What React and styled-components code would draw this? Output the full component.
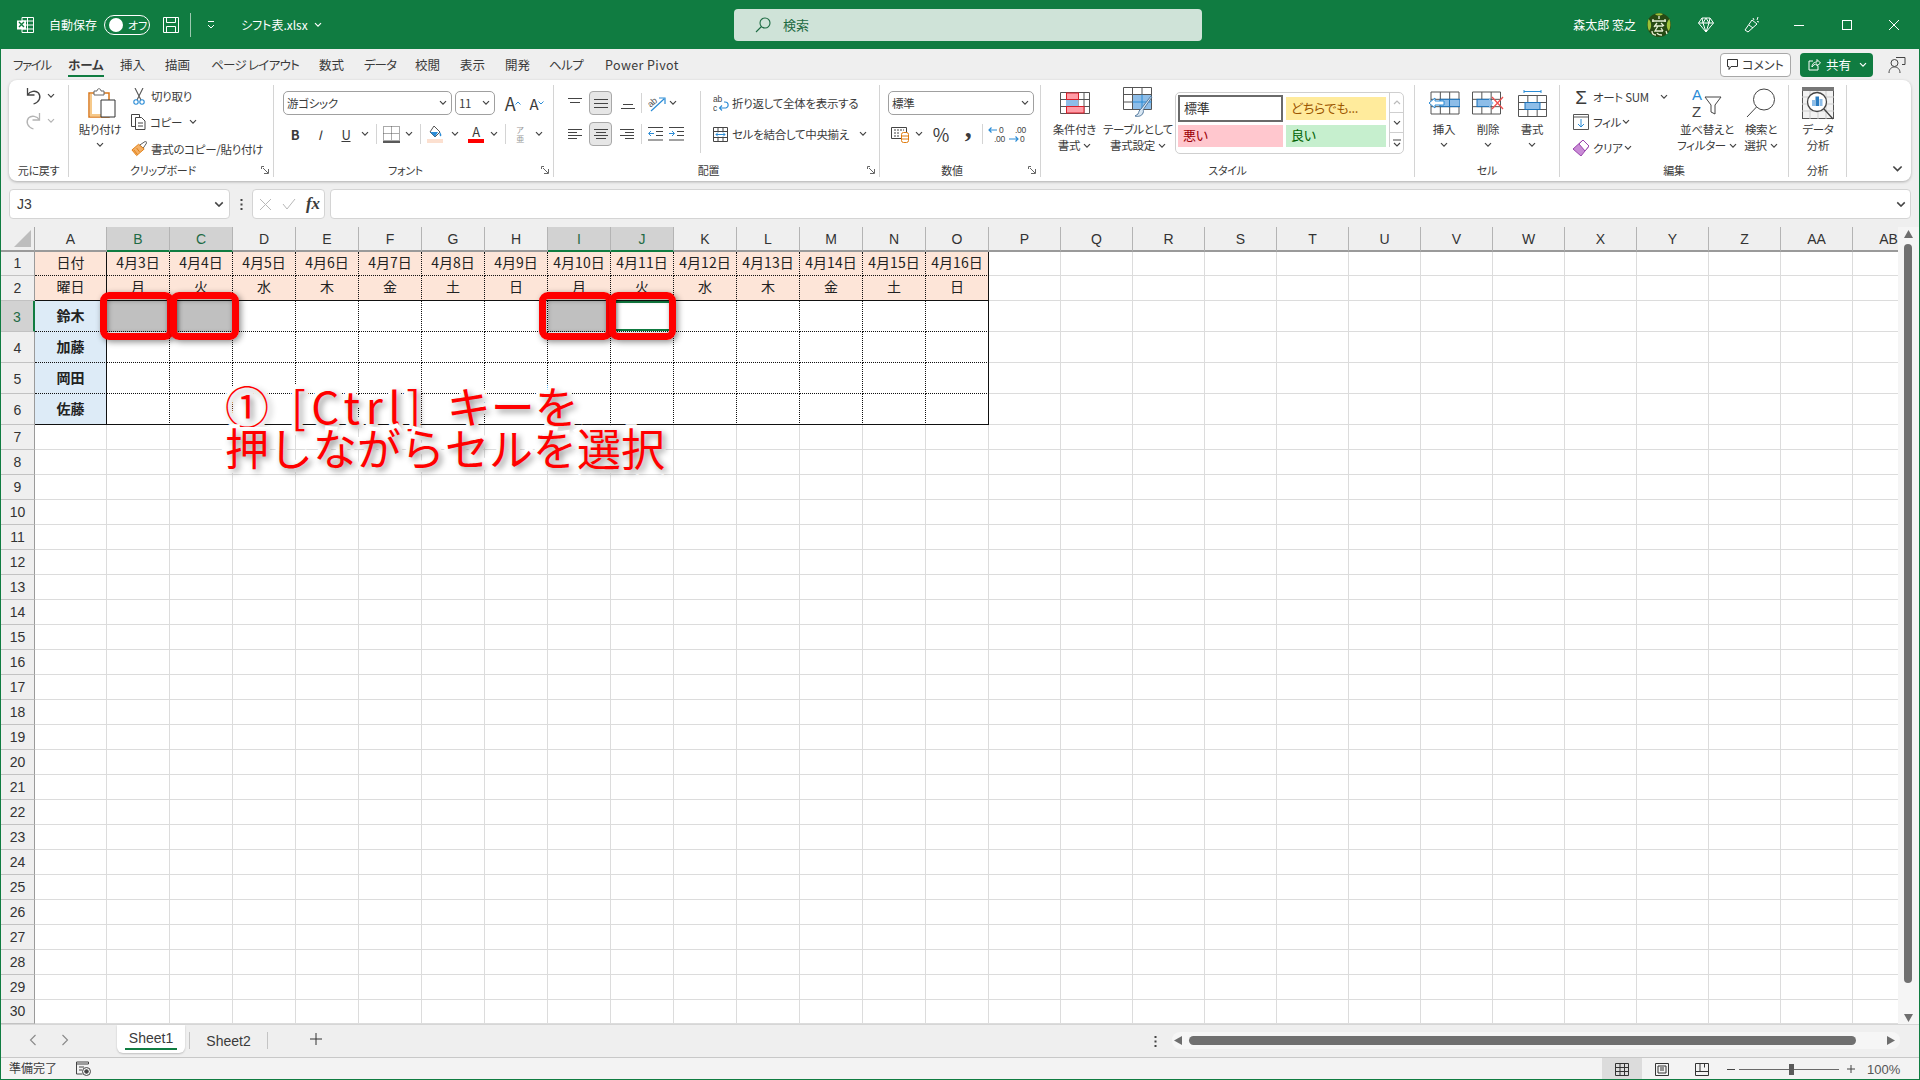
import React, { Fragment } from "react";
import styled, { createGlobalStyle } from "styled-components";

const GREEN = "#107c41";
const INK = "#3b3b3b";
const BLUE = "#2b8cd6";
const SKY = "#8dbde8";

const GlobalStyle = createGlobalStyle`
  html, body { margin: 0; padding: 0; background: #efefef; }
  body {
    font-family: "Noto Sans CJK JP", "Noto Sans", sans-serif;
    font-feature-settings: "palt";
    color: ${INK};
    overflow: hidden;
  }
`;

const Window = styled.div`
  position: relative;
  width: 1920px;
  height: 1080px;
  background: #efefef;
  overflow: hidden;
  &::after {
    content: "";
    position: absolute;
    inset: 0;
    border: 1px solid ${GREEN};
    border-width: 0 1px 1.5px 1.5px;
    pointer-events: none;
    z-index: 5;
  }
`;

/* title bar */
const TitleBar = styled.header`
  display: grid;
  grid-template-columns: 734px 468px 1fr;
  align-items: center;
  height: 49px;
  background: ${GREEN};
  color: #fff;
  font-size: 12px;
`;
const TitleLeft = styled.div`
  display: flex;
  align-items: center;
  padding-left: 17px;
`;
const TitleText = styled.span`
  margin-left: ${(p) => p.$ml || 0}px;
  white-space: nowrap;
`;
const Toggle = styled.div`
  display: flex;
  align-items: center;
  gap: 5px;
  width: 46px;
  height: 20px;
  margin-left: 7px;
  padding-left: 4px;
  box-sizing: border-box;
  border: 1px solid #fff;
  border-radius: 10px;
  font-size: 11px;
  white-space: nowrap;
  &::before {
    content: "";
    flex: none;
    width: 14px;
    height: 14px;
    border-radius: 50%;
    background: #fff;
  }
`;
const TitleRule = styled.i`
  width: 1px;
  height: 24px;
  margin-left: 11px;
  background: #9cc9b0;
`;
const TitleIcon = styled.span`
  display: flex;
  margin-left: ${(p) => p.$ml || 0}px;
`;
const SearchBox = styled.div`
  display: flex;
  align-items: center;
  height: 32px;
  padding-left: 21px;
  gap: 12px;
  border-radius: 4px;
  background: #cfe3d8;
  color: #1d6b43;
  font-size: 13px;
`;
const TitleRight = styled.div`
  display: flex;
  align-items: center;
  justify-content: flex-end;
  padding-right: 2px;
`;
const Avatar = styled.span`
  display: flex;
  margin: 0 13px 0 11px;
`;
const CaptionSlot = styled.span`
  display: flex;
  justify-content: center;
  width: ${(p) => p.$w || 47.5}px;
`;

/* tabs */
const TabRow = styled.nav`
  display: flex;
  align-items: center;
  height: 31px;
  padding-left: 13px;
  font-size: 12.5px;
`;
const Tab = styled.div`
  width: ${(p) => p.$w}px;
  white-space: nowrap;
  letter-spacing: ${(p) => p.$ls || 0}px;
  span {
    position: relative;
    display: inline-block;
    font-weight: ${(p) => (p.$active ? 700 : 400)};
  }
  span::after {
    content: "";
    display: ${(p) => (p.$active ? "block" : "none")};
    position: absolute;
    left: 0;
    right: 0;
    bottom: -3px;
    height: 2px;
    background: ${GREEN};
  }
`;
const TabActions = styled.div`
  display: flex;
  align-items: center;
  margin-left: auto;
`;
const CommentBtn = styled.div`
  display: flex;
  align-items: center;
  justify-content: center;
  gap: 4px;
  width: 71px;
  height: 24px;
  box-sizing: border-box;
  background: #fff;
  border: 1px solid #a8a8a8;
  border-radius: 4px;
  font-size: 12px;
  white-space: nowrap;
`;
const ShareBtn = styled.div`
  display: flex;
  align-items: center;
  gap: 5px;
  width: 73px;
  height: 24px;
  margin-left: 9px;
  padding-left: 8px;
  box-sizing: border-box;
  background: ${GREEN};
  border-radius: 4px;
  color: #fff;
  font-size: 12.5px;
  white-space: nowrap;
`;
const ShareChev = styled.span`
  display: flex;
  margin-left: 3px;
`;
const FeedbackSlot = styled.span`
  display: flex;
  justify-content: center;
  width: 47px;
`;

/* ribbon */
const Ribbon = styled.section`
  display: flex;
  height: 101px;
  margin: 0 9px;
  background: #fff;
  border-radius: 8px;
  box-shadow: 0 1px 3px rgba(0, 0, 0, 0.28);
  font-size: 11.5px;
  letter-spacing: -0.3px;
`;
const Group = styled.div`
  display: flex;
  flex-direction: column;
  flex: none;
  width: ${(p) => p.$w}px;
  height: 92px;
  margin-top: 5px;
  box-sizing: border-box;
  border-right: 1px solid #d4d4d4;
`;
const GroupBody = styled.div`
  display: flex;
  flex: 1;
  padding-left: ${(p) => p.$pl || 0}px;
  padding-top: ${(p) => p.$pt || 0}px;
`;
const GroupFoot = styled.div`
  display: flex;
  align-items: center;
  height: 14px;
  font-size: 11px;
`;
const FootText = styled.span`
  flex: 1;
  text-align: center;
`;
const Launcher = styled.span`
  display: flex;
  justify-content: center;
  width: 16px;
`;
const Stack = styled.div`
  display: flex;
  flex-direction: column;
  flex: none;
  width: ${(p) => (p.$w ? p.$w + "px" : "auto")};
  gap: ${(p) => p.$gap ?? 0}px;
  margin-left: ${(p) => p.$ml || 0}px;
`;
const Row = styled.div`
  display: flex;
  align-items: center;
  height: ${(p) => p.$h || 26}px;
  white-space: nowrap;
`;
const Slot = styled.span`
  display: flex;
  align-items: center;
  justify-content: center;
  flex: none;
  width: ${(p) => p.$w}px;
  height: 100%;
  margin-left: ${(p) => p.$ml || 0}px;
  font-size: ${(p) => p.$fs || 12}px;
  font-weight: ${(p) => p.$fw || 400};
  font-style: ${(p) => p.$fst || "normal"};
  text-decoration: ${(p) => p.$td || "none"};
  color: ${(p) => p.$c || "inherit"};
`;
const RowLabel = styled.span`
  margin-left: ${(p) => p.$ml || 0}px;
`;
const MiniRule = styled.i`
  flex: none;
  width: 1px;
  height: ${(p) => p.$h || 20}px;
  margin: 0 ${(p) => p.$mr || 0}px 0 ${(p) => p.$ml || 0}px;
  background: #d4d4d4;
`;
const Select = styled.div`
  display: flex;
  align-items: center;
  justify-content: space-between;
  flex: none;
  width: ${(p) => p.$w}px;
  height: 24px;
  margin-left: ${(p) => p.$ml || 0}px;
  padding: 0 4px 0 3px;
  box-sizing: border-box;
  background: #fff;
  border: 1px solid #a0a0a0;
  border-radius: 5px;
  font-size: 11.5px;
`;
const AlignBtn = styled.span`
  display: flex;
  align-items: center;
  justify-content: center;
  flex: none;
  width: 23px;
  height: 24px;
  margin: 0 ${(p) => p.$mr}px 0 7px;
  box-sizing: border-box;
  border-radius: 4px;
  background: ${(p) => (p.$on ? "#e6e6e6" : "transparent")};
  border: 1px solid ${(p) => (p.$on ? "#a8a8a8" : "transparent")};
`;
const BigBtn = styled.div`
  display: flex;
  flex-direction: column;
  align-items: center;
  flex: none;
  width: ${(p) => p.$w}px;
  line-height: 16px;
  text-align: center;
  white-space: nowrap;
`;
const BigIcon = styled.span`
  display: flex;
  align-items: center;
  justify-content: center;
  height: 30px;
  margin: 3px 0 3px;
  padding-left: ${(p) => p.$nudge || 0}px;
`;
const BigChev = styled.span`
  display: flex;
  align-items: center;
  height: 16px;
`;
const LineChev = styled.span`
  display: inline-flex;
  margin-left: 3px;
  vertical-align: 2px;
`;
const Gallery = styled.div`
  display: grid;
  grid-template-columns: 105px 100px 15px;
  grid-template-rows: 27px 22px;
  gap: 3px;
  width: 229px;
  height: 62px;
  margin: 7px 0 0 5px;
  padding: 2px 0 0 2px;
  box-sizing: border-box;
  border: 1px solid #cfcfcf;
  border-radius: 5px;
  font-size: 13px;
`;
const StyleCell = styled.div`
  display: flex;
  align-items: center;
  padding-left: ${(p) => (p.$box ? 4 : 5)}px;
  padding-bottom: 3px;
  box-sizing: border-box;
  margin: ${(p) => (p.$inset ? "2px 0 2px" : 0)};
  background: ${(p) => p.$bg};
  color: ${(p) => p.$c};
  border: ${(p) => (p.$box ? "2px solid #6a6a6a" : "none")};
`;
const GalleryScroll = styled.div`
  grid-column: 3;
  grid-row: 1 / span 2;
  display: grid;
  grid-template-rows: repeat(3, 20px);
  margin: -2px 0 0 0;
  border-left: 1px solid #cfcfcf;
  span {
    display: flex;
    align-items: center;
    justify-content: center;
    border-bottom: 1px solid #cfcfcf;
  }
  span:last-child { border-bottom: none; }
`;
const RibbonEnd = styled.div`
  display: flex;
  flex: 1;
  align-items: flex-end;
  justify-content: flex-end;
  padding: 0 8px 9px 0;
`;

/* formula bar */
const FormulaBar = styled.div`
  display: flex;
  align-items: stretch;
  height: 30px;
  margin: 8px 9px 0;
`;
const FieldBox = styled.div`
  display: flex;
  align-items: center;
  box-sizing: border-box;
  background: #fff;
  border: 1px solid #d4d4d4;
  border-radius: 4px;
  font-size: 14px;
`;
const NameBox = styled(FieldBox)`
  justify-content: space-between;
  width: 221px;
  padding: 0 5px 0 7px;
  font-family: "Liberation Sans", sans-serif;
`;
const GripSlot = styled.span`
  display: flex;
  align-items: center;
  justify-content: center;
  width: 22px;
`;
const FxBox = styled(FieldBox)`
  width: 73px;
  margin-right: 5px;
`;
const FxText = styled.span`
  font-family: "Liberation Serif", serif;
  font-style: italic;
  font-weight: 700;
  font-size: 17px;
`;
const FormulaInput = styled(FieldBox)`
  flex: 1;
  justify-content: flex-end;
  padding-right: 4px;
`;

/* sheet */
const Workspace = styled.main`
  display: flex;
  height: 797px;
  margin-top: 8px;
`;
const GridWrap = styled.div`
  position: relative;
  flex: none;
  width: 1898px;
  overflow: hidden;
`;
const Sheet = styled.div`
  display: grid;
  grid-template-columns: 35px 72px repeat(14, 63px) repeat(13, 72px);
  grid-template-rows: 25px 24px 24.5px repeat(4, 31px) repeat(23, 25px) 24.5px;
  background: #fff;
`;
const Corner = styled.div`
  display: flex;
  align-items: flex-end;
  justify-content: flex-end;
  padding: 0 3px 3px 0;
  background: #efefef;
  border-right: 1px solid #a8a8a8;
  border-bottom: 2px solid #9a9a9a;
`;
const ColHead = styled.div`
  display: flex;
  align-items: center;
  justify-content: center;
  box-sizing: border-box;
  background: ${(p) => (p.$on ? "#d2d2d2" : "#efefef")};
  border-right: 1px solid #b4b4b4;
  border-bottom: ${(p) => (p.$on ? `2px solid ${GREEN}` : "2px solid #9a9a9a")};
  color: ${(p) => (p.$on ? "#1f6b45" : "#333")};
  font-family: "Liberation Sans", sans-serif;
  font-size: 14px;
`;
const RowHead = styled.div`
  display: flex;
  align-items: center;
  justify-content: center;
  box-sizing: border-box;
  padding: ${(p) => p.$pt || 0}px 0 ${(p) => p.$pb || 0}px 1px;
  background: ${(p) => (p.$on ? "#d2d2d2" : "#efefef")};
  border-right: ${(p) => (p.$on ? `2px solid ${GREEN}` : "1px solid #9a9a9a")};
  border-bottom: 1px solid #c2c2c2;
  color: ${(p) => (p.$on ? "#1f6b45" : "#333")};
  font-family: "Liberation Sans", sans-serif;
  font-size: 14px;
`;
const Cell = styled.div`
  position: relative;
  display: flex;
  align-items: center;
  justify-content: center;
  box-sizing: border-box;
  min-width: 0;
  padding-bottom: ${(p) => p.$pb || 0}px;
  white-space: nowrap;
  font-feature-settings: normal;
  font-size: 14px;
  font-weight: ${(p) => (p.$bold ? 700 : 400)};
  color: #222;
  background: ${(p) => p.$bg || "#fff"};
  border-right: ${(p) => p.$br || "1px solid #dcdcdc"};
  border-bottom: ${(p) => p.$bb || "1px solid #dcdcdc"};
  box-shadow: ${(p) => (p.$active ? `inset 0 2px 0 ${GREEN}, inset 0 -2px 0 ${GREEN}` : "none")};
`;
const RedFrame = styled.div`
  position: absolute;
  top: -9px;
  bottom: -9px;
  left: ${(p) => p.$l}px;
  right: ${(p) => p.$r}px;
  z-index: 2;
  border: 7.5px solid #ff0000;
  border-radius: 9px;
  box-shadow: 2px 2px 6px rgba(0, 0, 0, 0.45), inset 1px 1px 5px rgba(0, 0, 0, 0.4);
`;
const Annotation = styled.div`
  position: absolute;
  left: 225px;
  top: 158px;
  z-index: 3;
  font-size: 44px;
  line-height: 41.5px;
  font-feature-settings: normal;
  white-space: nowrap;
  color: #ff0000;
  -webkit-text-stroke: 8px #fff;
  paint-order: stroke fill;
  text-shadow: 3px 3px 6px rgba(0, 0, 0, 0.45);
`;
const AnnoLatin = styled.span`
  margin: 0 20px 0 22px;
  letter-spacing: 5.5px;
`;
const VScroll = styled.aside`
  display: flex;
  flex-direction: column;
  align-items: center;
  flex: 1;
  padding: 3px 2px 0 0;
  background: #f5f5f5;
`;
const VThumb = styled.div`
  width: 8px;
  height: 739px;
  margin: 5px 0 31px;
  border-radius: 4px;
  background: #707070;
`;

/* sheet tabs */
const SheetBar = styled.div`
  display: flex;
  align-items: flex-start;
  height: 33px;
  box-sizing: border-box;
  border-top: 1px solid #d6d6d6;
`;
const SheetLeft = styled.div`
  display: flex;
  align-items: flex-start;
  flex: none;
  width: 1148px;
  height: 100%;
`;
const NavArrow = styled.span`
  display: flex;
  align-items: center;
  justify-content: center;
  flex: none;
  width: 32px;
  height: 30px;
`;
const Spacer = styled.span`
  flex: none;
  width: ${(p) => p.$w}px;
`;
const SheetTab = styled.div`
  display: flex;
  flex-direction: column;
  align-items: center;
  flex: none;
  width: 68px;
  height: 28px;
  box-sizing: border-box;
  padding-top: 5px;
  background: #fff;
  border-radius: 0 0 6px 6px;
  box-shadow: 0 1px 2px rgba(0, 0, 0, 0.2);
  font-family: "Liberation Sans", sans-serif;
  font-size: 14px;
  line-height: 17px;
  &::after {
    content: "";
    width: 52px;
    height: 2px;
    margin-top: 1px;
    background: ${GREEN};
  }
`;
const SheetName = styled.div`
  flex: none;
  width: 77px;
  padding-top: 8px;
  text-align: center;
  font-family: "Liberation Sans", sans-serif;
  font-size: 14px;
  line-height: 17px;
`;
const SheetRule = styled.i`
  flex: none;
  width: 1px;
  height: 17px;
  margin: 7px 0 0;
  background: #c4c4c4;
`;
const AddSheet = styled.span`
  display: flex;
  justify-content: center;
  flex: none;
  width: 96px;
  padding-top: 8px;
`;
const HDots = styled.span`
  display: flex;
  justify-content: center;
  flex: none;
  width: 14px;
  padding-top: 11px;
`;
const HTrack = styled.div`
  display: flex;
  align-items: center;
  width: 728px;
  height: 17px;
  margin: 7px 0 0 10px;
  padding: 0 4px 0 2px;
  box-sizing: border-box;
  background: #f6f6f6;
  border-radius: 8px;
`;
const HThumb = styled.div`
  width: 667px;
  height: 9px;
  margin: 0 auto 0 6px;
  border-radius: 5px;
  background: #707070;
`;

/* status bar */
const StatusBar = styled.footer`
  display: flex;
  align-items: center;
  height: 23px;
  padding-left: 9px;
  box-sizing: border-box;
  background: #f3f3f3;
  border-top: 1px solid #c8c8c8;
  font-size: 12px;
`;
const StatusText = styled.span`
  margin-top: -4px;
`;
const StatusIcon = styled.span`
  display: flex;
  margin: -2px 0 0 19px;
`;
const ViewGroup = styled.div`
  display: flex;
  align-self: stretch;
  margin-left: auto;
`;
const ViewBtn = styled.span`
  display: flex;
  align-items: center;
  justify-content: center;
  width: 40px;
  background: ${(p) => (p.$on ? "#dcdcdc" : "transparent")};
`;
const Zoomer = styled.div`
  display: flex;
  align-items: center;
  width: 198px;
  padding-left: 5px;
  box-sizing: border-box;
  font-family: "Liberation Sans", sans-serif;
  font-size: 13px;
  color: #555;
`;
const ZoomTrack = styled.div`
  position: relative;
  width: 100px;
  height: 1px;
  margin: 0 8px 0 4px;
  background: #6a6a6a;
  &::after {
    content: "";
    position: absolute;
    left: 50px;
    top: -5px;
    width: 5px;
    height: 11px;
    background: #5a5a5a;
  }
`;
const ZoomText = styled.span`
  margin-left: 12px;
`;
const ColorA = styled.span`
  display: block;
  width: 16px;
  padding-bottom: 1px;
  border-bottom: 4px solid #ff0000;
  text-align: center;
  font-size: 13px;
  line-height: 13px;
`;
const Phonetic = styled.span`
  line-height: 9px;
  text-align: center;
`;
const Comma = styled.span`
  font-family: "Liberation Serif", serif;
  font-size: 28px;
  line-height: 14px;
  margin-top: -12px;
`;
const SigmaGlyph = styled.span`
  font-family: "Liberation Sans", sans-serif;
  font-size: 19px;
  font-weight: 400;
  line-height: 1;
`;

/* icons */
const Chev = ({ c = "#444", s = 8 }) => (
  <svg width={s} height={s * 0.65} viewBox="0 0 8 5">
    <path d="M1 1l3 3 3-3" fill="none" stroke={c} strokeWidth="1.2" />
  </svg>
);
const ChevUp = () => (
  <svg width="8" height="5" viewBox="0 0 8 5">
    <path d="M1 4l3-3 3 3" fill="none" stroke="#bbb" strokeWidth="1.2" />
  </svg>
);
const MoreChev = () => (
  <svg width="8" height="9" viewBox="0 0 8 9" fill="none" stroke="#444" strokeWidth="1.1">
    <path d="M0 1h8M1 4l3 3 3-3" />
  </svg>
);
const ExcelLogo = () => (
  <svg width="17" height="16" viewBox="0 0 17 16">
    <path d="M5 .5h11.5v15H5zM5 4h11.5M5 8h11.5M5 12h11.5M10.5.5v15" fill="none" stroke="#fff" />
    <rect x="0" y="3.5" width="9" height="9" fill="#fff" />
    <path d="M2 5l5 5M7 5l-5 5" stroke={GREEN} strokeWidth="1.4" />
  </svg>
);
const SaveIcon = () => (
  <svg width="16" height="16" viewBox="0 0 16 16" fill="none" stroke="#fff">
    <path d="M.5.5h15v15H.5zM3.5.5v5h9v-5M3.5 15.500v-6h9v6" />
  </svg>
);
const QuickChev = () => (
  <svg width="8" height="8" viewBox="0 0 8 8" fill="none" stroke="#fff">
    <path d="M1 .5h6M1 4l3 3 3-3" />
  </svg>
);
const SearchIcon = () => (
  <svg width="16" height="16" viewBox="0 0 16 16" fill="none" stroke="#1d6b43" strokeWidth="1.1">
    <circle cx="10" cy="6" r="5" />
    <path d="M6.500 9.500L1 15" />
  </svg>
);
const UserAvatar = () => (
  <svg width="24" height="24" viewBox="0 0 24 24">
    <circle cx="12" cy="12" r="12" fill="#274a14" />
    <path d="M1.500 6C.2 10 .2 14 2 18c3-3 3-9-.5-12zM22.500 6c1.300 4 1.300 8-.5 12-3-3-3-9 .5-12zM8 1c3-1 6-.8 8 0-2 2-6 2-8 0z" fill="#9dc23a" />
    <path d="M12 3v3M5 8h14M6 6v3M18 6v3M10 10l-3 4M14 10l3 3M8 13h8M11 13l-3 5h8M14 15l2 3M5 18c0 3 2 4 4 4M10 20c1 2 3 2 5 2M19 18l1 3" stroke="#e6efd4" strokeWidth="1.3" fill="none" />
  </svg>
);
const DiamondIcon = () => (
  <svg width="16" height="16" viewBox="0 0 16 16" fill="none" stroke="#fff">
    <path d="M4 1h8l3.500 5L8 15 .5 6zM.5 6h15M5 6l3 9 3-9M4 1l1 5 3-5 3 5 1-5" />
  </svg>
);
const PenIcon = () => (
  <svg width="16" height="18" viewBox="0 0 16 18" fill="none" stroke="#fff">
    <path d="M1 14l7-10 5 4-9 8-3-2zM5 9l4 3M9 2l1 2M14 1l-1 3M15 6l-2-.5" />
  </svg>
);
const Minimize = () => <svg width="10" height="10"><path d="M0 5.500h10" stroke="#fff" /></svg>;
const Maximize = () => <svg width="10" height="10"><rect x=".5" y=".5" width="9" height="9" fill="none" stroke="#fff" /></svg>;
const CloseIcon = () => <svg width="10" height="10"><path d="M0 0l10 10M10 0L0 10" stroke="#fff" /></svg>;
const CommentIcon = () => (
  <svg width="11" height="12" viewBox="0 0 11 12" fill="none" stroke="#333">
    <path d="M.5.5h10v7H4L2 10.500V7.500H.5z" />
  </svg>
);
const ShareIcon = () => (
  <svg width="13" height="13" viewBox="0 0 13 13" fill="none" stroke="#fff">
    <path d="M5 3H1v9h9V8M4 9c0-4 3-5 5-5V1.500L12.500 5 9 8V6C7 6 5 7 4 9z" />
  </svg>
);
const FeedbackIcon = () => (
  <svg width="18" height="18" viewBox="0 0 18 18" fill="none" stroke="#444">
    <circle cx="6.500" cy="7" r="3.500" />
    <path d="M1 17c0-4 2.500-6 5.500-6s5.500 2 5.500 6M8 1.500h9v7h-3" />
  </svg>
);
const UndoIcon = ({ c = "#444", flip }) => (
  <svg width="17" height="18" viewBox="0 0 17 18" fill="none" stroke={c} strokeWidth="1.3" style={flip ? { transform: "scaleX(-1)" } : undefined}>
    <path d="M2.500 1v7h7M2.500 8c2.500-4 8-5 11-2 3 4 1 9-5 11" />
  </svg>
);
const PasteIcon = () => (
  <svg width="28" height="30" viewBox="0 0 28 30">
    <path d="M1 5h20v24H1z" fill="#fff" stroke="#d9781b" strokeWidth="1.500" />
    <path d="M2 26h11v2.500H2z" fill="#f6c98a" />
    <path d="M2 6h2v22H2z" fill="#f6c98a" />
    <path d="M6 3h3c0-3 4-3 4 0h3v4H6z" fill="#fff" stroke="#666" />
    <path d="M13 12h14v17H13z" fill="#fff" stroke="#333" />
  </svg>
);
const CutIcon = () => (
  <svg width="12" height="17" viewBox="0 0 12 17" fill="none" strokeWidth="1.100">
    <path d="M2 0l6 12M10 0L4 12" stroke="#555" />
    <circle cx="3" cy="14" r="2.200" stroke={BLUE} />
    <circle cx="9" cy="14" r="2.200" stroke={BLUE} />
  </svg>
);
const CopyIcon = () => (
  <svg width="16" height="16" viewBox="0 0 16 16" fill="#fff" stroke="#444">
    <path d="M.5.5h8v12h-8z" />
    <path d="M4.500 3.500h6l3.500 3.500v8.500H4.500zM7 9h5M7 12h5" />
  </svg>
);
const BrushIcon = () => (
  <svg width="17" height="16" viewBox="0 0 17 16">
    <path d="M9 4l4 3 4-6-2-1z" fill="#fff" stroke="#555" />
    <path d="M8 3L1 9l5 6 8-7z" fill="#f4b066" stroke="#e07d10" />
    <path d="M3 9l4 5M6 7l3 4" stroke="#e07d10" />
  </svg>
);
const BorderIcon = () => (
  <svg width="17" height="17" viewBox="0 0 17 17" fill="none" stroke="#555" strokeDasharray="1 1">
    <path d="M.5.5h16v14H.5zM8.500.5v14M.5 7.500h16" />
    <path d="M0 16h17" stroke="#222" strokeDasharray="none" strokeWidth="1.500" />
  </svg>
);
const FillIcon = () => (
  <svg width="16" height="18" viewBox="0 0 16 18">
    <path d="M7 1l6 6-5 5-5-5z" fill="#fff" stroke="#555" />
    <path d="M13 7c1 2 2 3 1 4s-2-1-1-4z" fill={BLUE} />
    <path d="M3 7h8l-3 5z" fill={BLUE} />
    <rect y="14" width="16" height="4" fill="#fce0d0" />
  </svg>
);
const Caret = ({ up, c = BLUE }) => (
  <svg width="6" height="4" viewBox="0 0 6 4" fill="none" stroke={c}>
    <path d={up ? "M.5 3.500L3 1l2.500 2.500" : "M.5.5L3 3 5.500.5"} />
  </svg>
);
const Launch = () => (
  <svg width="8" height="8" viewBox="0 0 8 8" fill="none" stroke="#666">
    <path d="M.5 3V.5H3M2 2l5 5M7.500 3v4.500H3" />
  </svg>
);
const AlignLines = ({ kind }) => {
  const map = {
    top: "M0 .5h14M2 4.500h10",
    mid: "M0 1.500h14M0 5.500h14M0 9.500h14",
    low: "M2 6.500h10M0 10.500h14",
    left: "M0 .5h14M0 3.500h9M0 6.500h14M0 9.500h9",
    center: "M0 .5h14M2 3.500h10M0 6.500h14M2 9.500h10",
    right: "M0 .5h14M5 3.500h9M0 6.500h14M5 9.500h9",
  };
  return (
    <svg width="14" height="11" viewBox="0 0 14 11" fill="none" stroke="#444">
      <path d={map[kind]} />
    </svg>
  );
};
const OrientIcon = () => (
  <svg width="18" height="17" viewBox="0 0 18 17" fill="none">
    <text x="0" y="10" fontSize="9" fill="#555" transform="rotate(-40 5 8)" fontFamily="Liberation Sans">ab</text>
    <path d="M3 16L16 4M11 3h6v6" stroke={BLUE} strokeWidth="1.200" />
  </svg>
);
const IndentIcon = ({ out }) => (
  <svg width="15" height="14" viewBox="0 0 15 14" fill="none" stroke="#444">
    <path d="M0 .5h15M8 4.500h7M8 8.500h7M0 13h15" />
    <path d={out ? "M6 6.500H1M3 4L.5 6.500 3 9" : "M0 6.500h5M3 4l2.500 2.500L3 9"} stroke={BLUE} />
  </svg>
);
const WrapIcon = () => (
  <svg width="16" height="19" viewBox="0 0 16 19">
    <text x="0" y="8" fontSize="8.500" fill="#444" fontFamily="Liberation Sans">ab</text>
    <text x="0" y="17" fontSize="8.500" fill="#444" fontFamily="Liberation Sans">c</text>
    <path d="M7 14h6c3-1 3-6-1-6h-1M9 11.500L6.500 14 9 16.500" fill="none" stroke={BLUE} strokeWidth="1.100" />
  </svg>
);
const MergeIcon = () => (
  <svg width="15" height="15" viewBox="0 0 15 15" fill="none" stroke="#444">
    <path d="M.5.5h14v14H.5zM.5 4.500h14M.5 10.500h14M5 .5v4M10 .5v4M5 10.500v4M10 10.500v4" />
    <path d="M3 7.500h9M5 5.500l-2 2 2 2M10 5.500l2 2-2 2" stroke={BLUE} />
  </svg>
);
const AccountingIcon = () => (
  <svg width="18" height="17" viewBox="0 0 18 17">
    <path d="M.5 1.500h15v11H.5z" fill="#fff" stroke="#444" />
    <path d="M3 4h10M3 7h6M3 10h5" stroke="#444" strokeDasharray="2 1" />
    <rect x="10.500" y="6.500" width="7" height="10" rx="2" fill="#fff" stroke="#e07d10" />
    <path d="M11 10h6M11 13h6" stroke="#e07d10" />
  </svg>
);
const DecimalIcon = ({ inc }) => (
  <svg width="18" height="19" viewBox="0 0 18 19">
    <text x={inc ? 11 : 6} y="8" fontSize="8.500" fill="#444" fontFamily="Liberation Sans">{inc ? "0" : ".00"}</text>
    <text x={inc ? 6 : 11} y="17" fontSize="8.500" fill="#444" fontFamily="Liberation Sans">{inc ? ".00" : "0"}</text>
    <path d={inc ? "M9 5H1M3.500 2.500L1 5l2.500 2.500" : "M0 14h9M6.500 11.500L9 14l-2.500 2.500"} fill="none" stroke={BLUE} strokeWidth="1.200" />
  </svg>
);
const SheetGrid = ({ w, h, cols, rows, children, x = 0, y = 0, vw = w, vh = h }) => {
  const lines = [];
  for (let i = 0; i <= cols; i++) lines.push(`M${x + (i * w) / cols} ${y}v${h}`);
  for (let i = 0; i <= rows; i++) lines.push(`M${x} ${y + (i * h) / rows}h${w}`);
  return (
    <svg width={vw} height={vh} viewBox={`0 0 ${vw} ${vh}`}>
      <rect x={x} y={y} width={w} height={h} fill="#fff" />
      <path d={lines.join("")} fill="none" stroke="#555" />
      {children}
    </svg>
  );
};
const CondIcon = () => (
  <svg width="30" height="22" viewBox="0 0 30 22">
    <path d="M.5.5h29v21H.5zM.5 7.500h29M.5 14.500h29M6.500.5v21M18 .5v21M24 .5v21" fill="#fff" stroke="#555" />
    <rect x="6" y="7.500" width="12" height="7" fill={SKY} />
    <rect x="6.500" y="1" width="12" height="6.500" fill="#ff9ca6" stroke="#d81f2a" />
    <rect x="6.500" y="14.500" width="17.500" height="6.500" fill="#ff9ca6" stroke="#d81f2a" />
  </svg>
);
const TableIcon = () => (
  <svg width="30" height="32" viewBox="0 0 30 32">
    <path d="M.5.5h28v22H.5zM.5 7.500h28M.5 15h28M9.500.5v22M19 .5v22" fill="#fff" stroke="#555" />
    <rect x="10" y="8" width="18" height="14" fill={SKY} />
    <path d="M9.500 15h19M19 7.500v15" stroke={BLUE} />
    <path d="M28 9L18 22c-2 1-2 3-3 5l-3 2c3 1 7 0 8-3 1-2 0-3 0-3L29 10z" fill="#d9e7f3" stroke="#557a9e" />
  </svg>
);
const InsertIcon = () => (
  <SheetGrid w={28} h={22} cols={3} rows={3} x={3} y={1} vw={32} vh={24}>
    <rect x="12" y="8.300" width="20" height="7.300" fill={SKY} stroke="#1b71b8" />
    <path d="M21.500 8.300v7.300" stroke="#1b71b8" />
    <path d="M16 10H7V7L1 12l6 5v-3h9z" fill="#fff" stroke={BLUE} />
  </SheetGrid>
);
const DeleteIcon = () => (
  <SheetGrid w={28} h={22} cols={3} rows={3} x={0.500} y={1} vw={32} vh={24}>
    <rect x="5" y="8.300" width="13" height="7.300" fill={SKY} stroke="#1b71b8" />
    <path d="M17 7l4.500 5-4.500 5z" fill={SKY} />
    <path d="M20 6l11 12M31 6L20 18" stroke="#f05050" strokeWidth="1.300" />
  </SheetGrid>
);
const FormatIcon = () => (
  <SheetGrid w={28} h={21} cols={3} rows={3} x={0.500} y={5.500} vw={29} vh={27}>
    <rect x="7" y="12.500" width="15" height="7" fill={SKY} stroke="#1b71b8" />
    <path d="M6 1.500h17M6 0v3M23 0v3" fill="none" stroke={BLUE} />
  </SheetGrid>
);
const FillDown = () => (
  <svg width="16" height="16" viewBox="0 0 16 16" fill="none" stroke="#555">
    <path d="M.5.5h15v15H.5zM.5 3h15" />
    <path d="M8 5v8M5 10l3 3 3-3" stroke={BLUE} />
  </svg>
);
const EraserIcon = () => (
  <svg width="16" height="16" viewBox="0 0 16 16">
    <path d="M10 0l6 6-8 10-8-7z" fill="#c98bd6" stroke="#9a46ad" />
    <path d="M6 4l6 7 4-5-6-6z" fill="#fff" stroke="#9a46ad" />
  </svg>
);
const SortIcon = () => (
  <svg width="30" height="32" viewBox="0 0 30 32">
    <text x="0" y="13" fontSize="15" fill={BLUE} fontFamily="Liberation Sans">A</text>
    <text x="0" y="30" fontSize="15" fill="#444" fontFamily="Liberation Sans">Z</text>
    <path d="M13 10h16l-6 8v9l-4-2v-7z" fill="#fff" stroke="#444" />
  </svg>
);
const FindIcon = () => (
  <svg width="30" height="30" viewBox="0 0 30 30" fill="none" stroke="#444">
    <circle cx="18" cy="11.500" r="10.500" />
    <path d="M10.500 19L1 29" />
  </svg>
);
const AnalysisIcon = () => (
  <svg width="32" height="33" viewBox="0 0 32 33">
    <rect x=".5" y=".5" width="31" height="31" fill="#f2f2f2" stroke="#555" />
    <rect x="0" y="0" width="32" height="4" fill="#777" />
    <path d="M0 10h32M0 17h32M0 24h32M8 4v28M16 4v28M24 4v28" stroke="#ccc" />
    <circle cx="15" cy="15" r="9.500" fill="#fff" stroke="#444" strokeWidth="1.300" />
    <rect x="10" y="13" width="3" height="6" fill={SKY} />
    <rect x="13.500" y="9.500" width="3.500" height="9.500" fill="#2b7cc0" />
    <rect x="17.500" y="12" width="3" height="7" fill={SKY} />
    <path d="M22 22l9 10" stroke="#444" strokeWidth="1.300" />
  </svg>
);
const ArrowSmall = ({ d = "right", c = "#888" }) => (
  <svg width="8" height="12" viewBox="0 0 8 12" fill="none" stroke={c} strokeWidth="1.100">
    <path d={d === "right" ? "M1.500 1l5 5-5 5" : "M6.500 1l-5 5 5 5"} />
  </svg>
);
const Tri = ({ dir, size = 9 }) => {
  const p = { up: "M0 8L4.500 0 9 8z", down: "M0 0h9L4.500 8z", left: "M8 0v9L0 4.500z", right: "M0 0v9l8-4.500z" };
  return (
    <svg width={size} height={size} viewBox="0 0 9 9">
      <path d={p[dir]} fill="#6e6e6e" />
    </svg>
  );
};
const DotsV = ({ c = "#444" }) => (
  <svg width="3" height="11" viewBox="0 0 3 11" fill={c}>
    <rect width="2" height="2" x=".5" />
    <rect width="2" height="2" x=".5" y="4.500" />
    <rect width="2" height="2" x=".5" y="9" />
  </svg>
);
const MacroIcon = () => (
  <svg width="15" height="15" viewBox="0 0 15 15" fill="none" stroke="#444">
    <path d="M.5 1h12v2H.5zM.5 3v10h6M3 6h5M3 9h3" />
    <circle cx="10.500" cy="10.500" r="4" fill="#f3f3f3" />
    <circle cx="10.500" cy="10.500" r="1.800" fill="#444" />
  </svg>
);
const ViewNormal = () => (
  <svg width="14" height="13" viewBox="0 0 14 13" fill="none" stroke="#333">
    <path d="M.5.5h13v12H.5zM.5 4.500h13M.5 8.500h13M5 .5v12M9.500.5v12" />
  </svg>
);
const ViewPage = () => (
  <svg width="14" height="13" viewBox="0 0 14 13" fill="none" stroke="#333">
    <path d="M.5.5h13v12H.5zM3 3h8v7H3zM5 5h4M5 7h4" />
  </svg>
);
const ViewBreak = () => (
  <svg width="14" height="13" viewBox="0 0 14 13" fill="none" stroke="#333">
    <path d="M.5.5h13v12H.5zM.5 8.500h13M5 .5v8M9.500.5v4" />
  </svg>
);
const MinusIcon = () => <svg width="8" height="8"><path d="M0 4.500h8" stroke="#444" /></svg>;
const PlusIcon = ({ s = 8, c = "#444" }) => (
  <svg width={s} height={s}><path d={`M0 ${s / 2}h${s}M${s / 2} 0v${s}`} stroke={c} /></svg>
);
const XMark = () => <svg width="13" height="13"><path d="M1 1l11 11M12 1L1 12" stroke="#b8b8b8" /></svg>;
const CheckMark = () => <svg width="14" height="12"><path d="M1 6l4 5 8-10" fill="none" stroke="#b8b8b8" /></svg>;

/* data */
const TABS = [
  ["ファイル", 55, -1.4], ["ホーム", 52, 0], ["挿入", 45, 0], ["描画", 46, 0], ["ページ レイアウト", 108, -0.7], ["数式", 45, 0],
  ["データ", 51, -1], ["校閲", 45, 0], ["表示", 45, 0], ["開発", 44, 0], ["ヘルプ", 56, -0.5], ["Power Pivot", 90, 0.4],
];
const COLS = ["A", "B", "C", "D", "E", "F", "G", "H", "I", "J", "K", "L", "M", "N", "O", "P", "Q", "R", "S", "T", "U", "V", "W", "X", "Y", "Z", "AA", "AB"];
const ROWS = Array.from({ length: 30 }, (_, i) => i + 1);
const DAYS = ["月", "火", "水", "木", "金", "土", "日"];
const NAMES = { 3: "鈴木", 4: "加藤", 5: "岡田", 6: "佐藤" };
const HOT_COLS = ["B", "C", "I", "J"];
const FRAMES = { B: [-7, -5], C: [0, -7], I: [-9, -3], J: [-2, -3] };
const BLACK = "1px solid #111";
const DOTS = "1px dotted #111";

const cellText = (col, r) => {
  if (col > 14) return "";
  if (r === 1) return col === 0 ? "日付" : `4月${col + 2}日`;
  if (r === 2) return col === 0 ? "曜日" : DAYS[(col - 1) % 7];
  if (col === 0) return NAMES[r] || "";
  return "";
};

const cellProps = (col, r) => {
  if (col > 14 || r > 6) return {};
  const props = {
    $br: col === 0 || col === 14 ? BLACK : DOTS,
    $bb: r === 2 || r === 6 ? BLACK : DOTS,
    $pb: r === 1 ? 4 : r === 2 ? 3 : 2,
  };
  if (r <= 2) props.$bg = "#fde5d8";
  else if (col === 0) {
    props.$bg = "#ddebf7";
    props.$bold = true;
  }
  if (r === 3 && ["B", "C", "I"].includes(COLS[col])) props.$bg = "#c0c0c0";
  if (r === 3 && COLS[col] === "J") props.$active = true;
  return props;
};

const App = () => (
  <Window>
    <GlobalStyle />
    <TitleBar>
      <TitleLeft>
        <ExcelLogo />
        <TitleText $ml={15}>自動保存</TitleText>
        <Toggle>オフ</Toggle>
        <TitleIcon $ml={13}><SaveIcon /></TitleIcon>
        <TitleRule />
        <TitleIcon $ml={16}><QuickChev /></TitleIcon>
        <TitleText $ml={26}>シフト表.xlsx</TitleText>
        <TitleIcon $ml={6}><Chev c="#fff" /></TitleIcon>
      </TitleLeft>
      <SearchBox>
        <SearchIcon />
        <span>検索</span>
      </SearchBox>
      <TitleRight>
        <span>森太郎 窓之</span>
        <Avatar><UserAvatar /></Avatar>
        <CaptionSlot $w={44}><DiamondIcon /></CaptionSlot>
        <CaptionSlot><PenIcon /></CaptionSlot>
        <CaptionSlot><Minimize /></CaptionSlot>
        <CaptionSlot><Maximize /></CaptionSlot>
        <CaptionSlot><CloseIcon /></CaptionSlot>
      </TitleRight>
    </TitleBar>

    <TabRow>
      {TABS.map(([label, w, ls], i) => (
        <Tab key={label} $w={w} $ls={ls} $active={i === 1}><span>{label}</span></Tab>
      ))}
      <TabActions>
        <CommentBtn><CommentIcon />コメント</CommentBtn>
        <ShareBtn>
          <ShareIcon />共有
          <ShareChev><Chev c="#fff" /></ShareChev>
        </ShareBtn>
        <FeedbackSlot><FeedbackIcon /></FeedbackSlot>
      </TabActions>
    </TabRow>

    <Ribbon>
      <Group $w={60}>
        <GroupBody $pl={14}>
          <Stack>
            <Row $h={22}><Slot $w={21}><UndoIcon /></Slot><Slot $w={14}><Chev /></Slot></Row>
            <Row $h={28}><Slot $w={21}><UndoIcon c="#b4b4b4" flip /></Slot><Slot $w={14}><Chev c="#b4b4b4" /></Slot></Row>
          </Stack>
        </GroupBody>
        <GroupFoot><FootText>元に戻す</FootText></GroupFoot>
      </Group>

      <Group $w={205}>
        <GroupBody>
          <BigBtn $w={62}>
            <BigIcon $nudge={4}><PasteIcon /></BigIcon>
            貼り付け
            <BigChev><Chev /></BigChev>
          </BigBtn>
          <Stack>
            <Row $h={22}><Slot $w={16}><CutIcon /></Slot><RowLabel $ml={4}>切り取り</RowLabel></Row>
            <Row $h={29}><Slot $w={16}><CopyIcon /></Slot><RowLabel $ml={3}>コピー</RowLabel><Slot $w={22}><Chev /></Slot></Row>
            <Row $h={25}><Slot $w={16}><BrushIcon /></Slot><RowLabel $ml={4}>書式のコピー/貼り付け</RowLabel></Row>
          </Stack>
        </GroupBody>
        <GroupFoot><FootText>クリップボード</FootText><Launcher><Launch /></Launcher></GroupFoot>
      </Group>

      <Group $w={280}>
        <GroupBody $pl={9} $pt={6}>
          <Stack $gap={7}>
            <Row $h={24}>
              <Select $w={169}>游ゴシック<Chev /></Select>
              <Select $w={40} $ml={3}>11<Chev /></Select>
              <Slot $w={22} $ml={7} $fs={18}>A<Caret up /></Slot>
              <Slot $w={26} $fs={15}>A<Caret /></Slot>
            </Row>
            <Row $h={24}>
              <Slot $w={24} $fw={700} $fs={13}>B</Slot>
              <Slot $w={25} $fst="italic" $fs={13}>I</Slot>
              <Slot $w={28} $td="underline" $fs={13}>U</Slot>
              <Slot $w={10}><Chev /></Slot>
              <Slot $w={12}><MiniRule /></Slot>
              <Slot $w={18}><BorderIcon /></Slot>
              <Slot $w={18}><Chev /></Slot>
              <Slot $w={4}><MiniRule /></Slot>
              <Slot $w={26}><FillIcon /></Slot>
              <Slot $w={14}><Chev /></Slot>
              <Slot $w={28}><ColorA>A</ColorA></Slot>
              <Slot $w={8}><Chev /></Slot>
              <Slot $w={14}><MiniRule /></Slot>
              <Slot $w={16} $fs={8} $c="#999"><Phonetic>ア<br />亜</Phonetic></Slot>
              <Slot $w={22}><Chev /></Slot>
            </Row>
          </Stack>
        </GroupBody>
        <GroupFoot><FootText>フォント</FootText><Launcher><Launch /></Launcher></GroupFoot>
      </Group>

      <Group $w={326}>
        <GroupBody $pl={14} $pt={6}>
          <Stack $gap={7} $w={132}>
            <Row $h={24}>
              <Slot $w={14}><AlignLines kind="top" /></Slot>
              <AlignBtn $on $mr={9}><AlignLines kind="mid" /></AlignBtn>
              <Slot $w={14}><AlignLines kind="low" /></Slot>
              <MiniRule $ml={6} $mr={6} />
              <Slot $w={18}><OrientIcon /></Slot>
              <Slot $w={14}><Chev /></Slot>
            </Row>
            <Row $h={24}>
              <Slot $w={14}><AlignLines kind="left" /></Slot>
              <AlignBtn $on $mr={8}><AlignLines kind="center" /></AlignBtn>
              <Slot $w={14}><AlignLines kind="right" /></Slot>
              <MiniRule $ml={7} $mr={6} />
              <Slot $w={15}><IndentIcon out /></Slot>
              <Slot $w={27}><IndentIcon /></Slot>
            </Row>
          </Stack>
          <MiniRule $h={62} />
          <Stack $gap={7} $ml={11}>
            <Row $h={24}><Slot $w={17}><WrapIcon /></Slot><RowLabel $ml={3}>折り返して全体を表示する</RowLabel></Row>
            <Row $h={24}><Slot $w={17}><MergeIcon /></Slot><RowLabel $ml={3}>セルを結合して中央揃え</RowLabel><Slot $w={28}><Chev /></Slot></Row>
          </Stack>
        </GroupBody>
        <GroupFoot><FootText>配置</FootText><Launcher><Launch /></Launcher></GroupFoot>
      </Group>

      <Group $w={161}>
        <GroupBody $pl={8} $pt={6}>
          <Stack $gap={7}>
            <Row $h={24}><Select $w={146}>標準<Chev /></Select></Row>
            <Row $h={24}>
              <Slot $w={24}><AccountingIcon /></Slot>
              <Slot $w={14}><Chev /></Slot>
              <Slot $w={30} $fs={18}>%</Slot>
              <Slot $w={24} $fs={18} $fw={700}><Comma>,</Comma></Slot>
              <MiniRule $ml={2} $mr={3} />
              <Slot $w={21}><DecimalIcon inc /></Slot>
              <Slot $w={22}><DecimalIcon /></Slot>
            </Row>
          </Stack>
        </GroupBody>
        <GroupFoot><FootText>数値</FootText><Launcher><Launch /></Launcher></GroupFoot>
      </Group>

      <Group $w={374}>
        <GroupBody $pl={2}>
          <BigBtn $w={63}>
            <BigIcon><CondIcon /></BigIcon>
            条件付き<span>書式<LineChev><Chev /></LineChev></span>
          </BigBtn>
          <BigBtn $w={64}>
            <BigIcon><TableIcon /></BigIcon>
            テーブルとして<span>書式設定<LineChev><Chev /></LineChev></span>
          </BigBtn>
          <Gallery>
            <StyleCell $box $bg="#fff" $c="#333">標準</StyleCell>
            <StyleCell $inset $bg="#ffeb9c" $c="#9c5700">どちらでも...</StyleCell>
            <GalleryScroll>
              <span><ChevUp /></span>
              <span><Chev /></span>
              <span><MoreChev /></span>
            </GalleryScroll>
            <StyleCell $bg="#ffc7ce" $c="#9c0006">悪い</StyleCell>
            <StyleCell $bg="#c6efce" $c="#006100">良い</StyleCell>
          </Gallery>
        </GroupBody>
        <GroupFoot><FootText>スタイル</FootText></GroupFoot>
      </Group>

      <Group $w={145}>
        <GroupBody $pl={7}>
          <BigBtn $w={44}><BigIcon><InsertIcon /></BigIcon>挿入<BigChev><Chev /></BigChev></BigBtn>
          <BigBtn $w={44}><BigIcon><DeleteIcon /></BigIcon>削除<BigChev><Chev /></BigChev></BigBtn>
          <BigBtn $w={44}><BigIcon><FormatIcon /></BigIcon>書式<BigChev><Chev /></BigChev></BigBtn>
        </GroupBody>
        <GroupFoot><FootText>セル</FootText></GroupFoot>
      </Group>

      <Group $w={229}>
        <GroupBody $pl={13}>
          <Stack $w={106}>
            <Row $h={24}><Slot $w={16}><SigmaGlyph>Σ</SigmaGlyph></Slot><RowLabel $ml={4}>オート SUM</RowLabel><Slot $w={30}><Chev /></Slot></Row>
            <Row $h={26}><Slot $w={16}><FillDown /></Slot><RowLabel $ml={4}>フィル</RowLabel><Slot $w={10}><Chev /></Slot></Row>
            <Row $h={26}><Slot $w={16}><EraserIcon /></Slot><RowLabel $ml={4}>クリア</RowLabel><Slot $w={10}><Chev /></Slot></Row>
          </Stack>
          <BigBtn $w={56}>
            <BigIcon><SortIcon /></BigIcon>
            並べ替えと<span>フィルター<LineChev><Chev /></LineChev></span>
          </BigBtn>
          <BigBtn $w={52}>
            <BigIcon><FindIcon /></BigIcon>
            検索と<span>選択<LineChev><Chev /></LineChev></span>
          </BigBtn>
        </GroupBody>
        <GroupFoot><FootText>編集</FootText></GroupFoot>
      </Group>

      <Group $w={58}>
        <GroupBody>
          <BigBtn $w={58}>
            <BigIcon><AnalysisIcon /></BigIcon>
            データ<span>分析</span>
          </BigBtn>
        </GroupBody>
        <GroupFoot><FootText>分析</FootText></GroupFoot>
      </Group>
      <RibbonEnd><Chev s={11} /></RibbonEnd>
    </Ribbon>

    <FormulaBar>
      <NameBox>J3<Chev s={10} /></NameBox>
      <GripSlot><DotsV /></GripSlot>
      <FxBox>
        <Slot $w={24}><XMark /></Slot>
        <Slot $w={24}><CheckMark /></Slot>
        <Slot $w={24}><FxText>fx</FxText></Slot>
      </FxBox>
      <FormulaInput><Chev s={10} /></FormulaInput>
    </FormulaBar>

    <Workspace>
      <GridWrap>
        <Sheet>
          <Corner>
            <svg width="17" height="17"><path d="M17 0v17H0z" fill="#bdbdbd" /></svg>
          </Corner>
          {COLS.map((c) => (
            <ColHead key={c} $on={HOT_COLS.includes(c)}>{c}</ColHead>
          ))}
          {ROWS.map((r) => (
            <Fragment key={r}>
              <RowHead $on={r === 3} $pt={r >= 3 && r <= 6 ? 2 : 0} $pb={r === 1 ? 2 : 0}>{r}</RowHead>
              {COLS.map((c, i) => (
                <Cell key={c} {...cellProps(i, r)}>
                  {cellText(i, r)}
                  {r === 3 && FRAMES[c] && <RedFrame $l={FRAMES[c][0]} $r={FRAMES[c][1]} />}
                </Cell>
              ))}
            </Fragment>
          ))}
        </Sheet>
        <Annotation>
          ①<AnnoLatin>[Ctrl]</AnnoLatin>キーを
          <br />
          押しながらセルを選択
        </Annotation>
      </GridWrap>
      <VScroll>
        <Tri dir="up" />
        <VThumb />
        <Tri dir="down" />
      </VScroll>
    </Workspace>

    <SheetBar>
      <SheetLeft>
        <Spacer $w={17} />
        <NavArrow><ArrowSmall d="left" /></NavArrow>
        <NavArrow><ArrowSmall /></NavArrow>
        <Spacer $w={36} />
        <SheetTab>Sheet1</SheetTab>
        <Spacer $w={4} />
        <SheetRule />
        <SheetName>Sheet2</SheetName>
        <SheetRule />
        <AddSheet><PlusIcon s={12} c="#333" /></AddSheet>
      </SheetLeft>
      <HDots><DotsV /></HDots>
      <HTrack>
        <Tri dir="left" />
        <HThumb />
        <Tri dir="right" />
      </HTrack>
    </SheetBar>

    <StatusBar>
      <StatusText>準備完了</StatusText>
      <StatusIcon><MacroIcon /></StatusIcon>
      <ViewGroup>
        <ViewBtn $on><ViewNormal /></ViewBtn>
        <ViewBtn><ViewPage /></ViewBtn>
        <ViewBtn><ViewBreak /></ViewBtn>
      </ViewGroup>
      <Zoomer>
        <MinusIcon />
        <ZoomTrack />
        <PlusIcon />
        <ZoomText>100%</ZoomText>
      </Zoomer>
    </StatusBar>
  </Window>
);

export default App;
